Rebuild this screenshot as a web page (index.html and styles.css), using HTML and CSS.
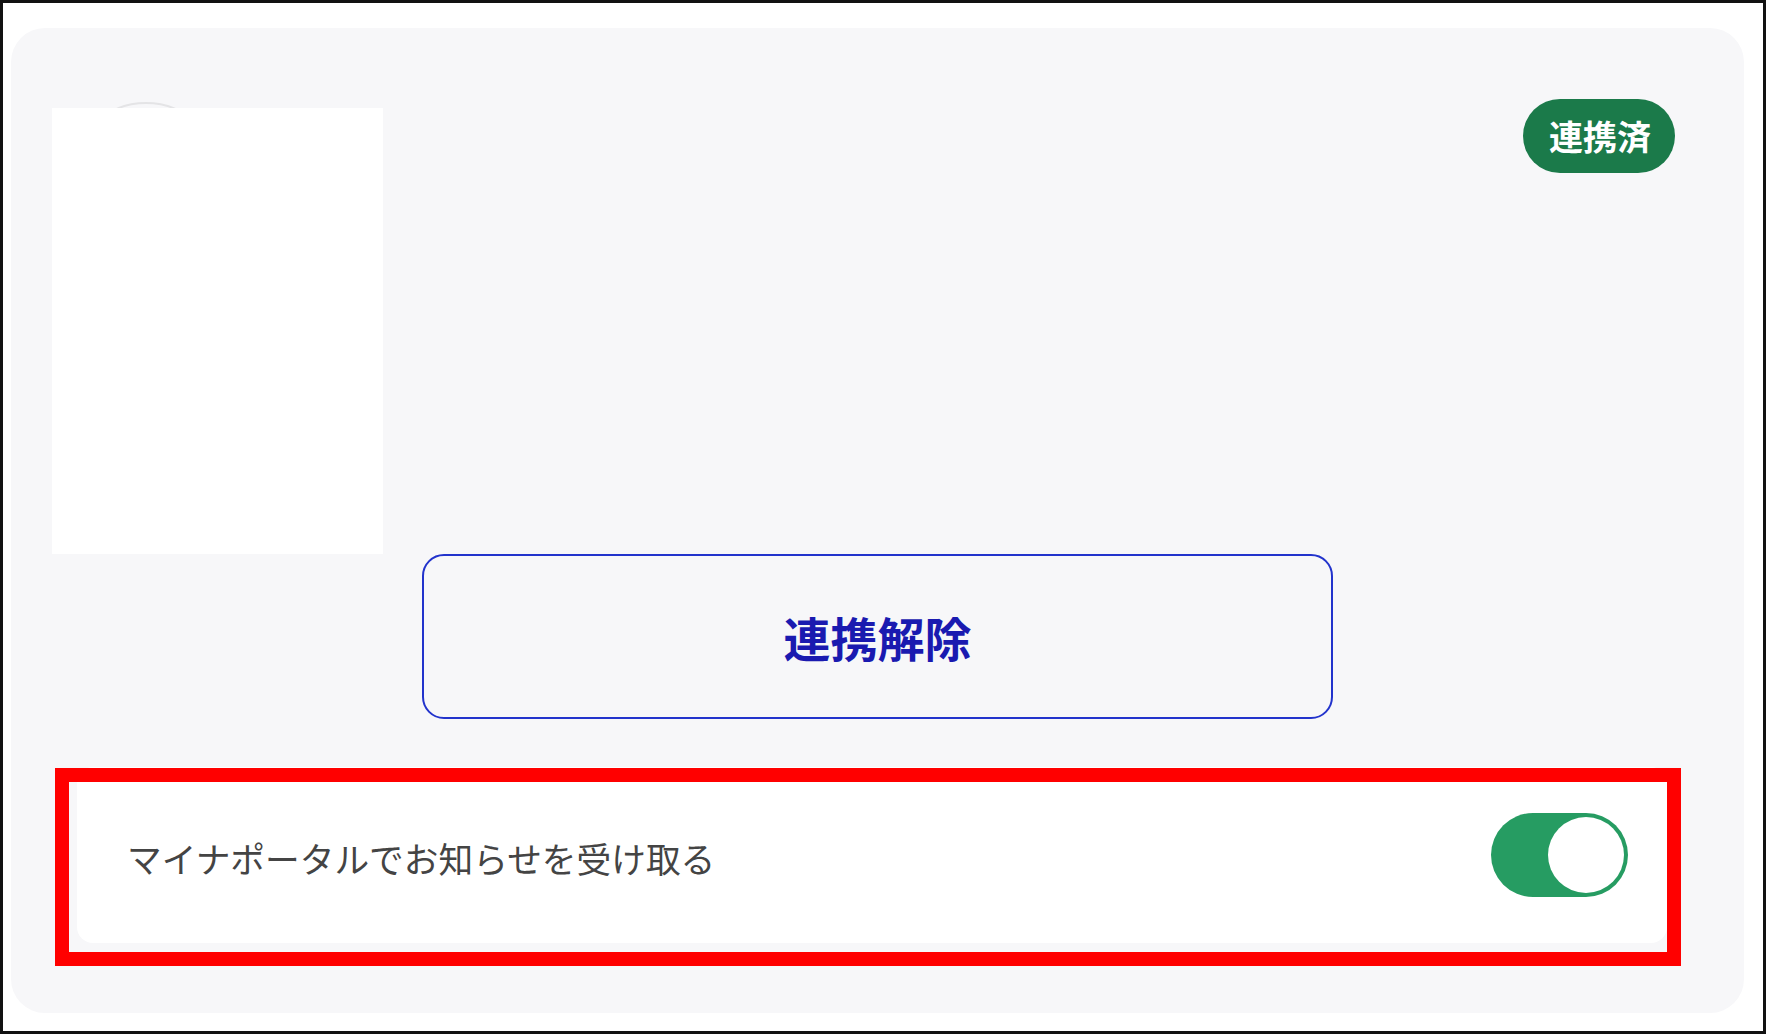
FILE: index.html
```
<!DOCTYPE html>
<html lang="ja">
<head>
    <meta charset="UTF-8">
    <meta name="viewport" content="width=device-width, initial-scale=1.0">
    <title>連携設定</title>
    <link rel="stylesheet" href="styles.css">
</head>
<body>

<div class="frame">
    <div class="card">
        <div class="card-top">
            <div class="avatar"></div>
            <span class="badge">連携済</span>
        </div>

        <button class="unlink-button">連携解除</button>

        <div class="notice-row">
            <span class="notice-label">マイナポータルでお知らせを受け取る</span>
            <div class="toggle is-on">
                <div class="toggle-knob"></div>
            </div>
        </div>

        <!-- redacted area and annotation -->
        <div class="redacted"></div>
        <div class="highlight"></div>
    </div>
</div>

</body>
</html>
```

FILE: styles.css
```
* {
    box-sizing: border-box;
}
body {
    margin: 0;
    padding: 0;
    background-color: #fff;
    font-family: "Noto Sans CJK JP", "Noto Sans", sans-serif;
}
.frame {
    width: 1766px;
    height: 1034px;
    border: 3px solid #111;
    padding: 25px 0 0 8px;
}
.card {
    position: relative;
    width: 1733px;
    height: 985px;
    background-color: #f7f7f9;
    border-radius: 34px;
    padding-top: 71px;
}
.card-top {
    display: flex;
    justify-content: space-between;
    align-items: flex-start;
    height: 455px;
    padding: 0 69px 0 60px;
}
.avatar {
    width: 150px;
    height: 150px;
    margin-top: 3px;
    border: 2px solid #e4e4e6;
    border-radius: 50%;
}
.badge {
    display: inline-block;
    height: 74px;
    line-height: 74px;
    padding: 0 24px 0 26px;
    background-color: #1b7a4a;
    color: #fff;
    font-size: 34px;
    font-weight: bold;
    border-radius: 37px;
}
.unlink-button {
    display: block;
    width: 911px;
    height: 165px;
    margin: 0 auto;
    background: transparent;
    border: 2px solid #2233cc;
    border-radius: 22px;
    color: #1a1ab0;
    font-family: inherit;
    font-size: 47px;
    font-weight: bold;
    cursor: pointer;
}
.notice-row {
    display: flex;
    justify-content: space-between;
    align-items: center;
    width: 1590px;
    height: 176px;
    margin: 48px 0 0 66px;
    padding: 0 39px 0 50px;
    background-color: #fff;
    border-radius: 16px;
}
.notice-label {
    font-size: 34.7px;
    line-height: 1;
    color: #444;
    margin-top: 6px;
}
.toggle {
    position: relative;
    width: 137px;
    height: 84px;
    border-radius: 42px;
    background-color: #ccc;
}
.toggle.is-on {
    background-color: #269c62;
}
.toggle-knob {
    position: absolute;
    top: 4px;
    right: 4px;
    width: 76px;
    height: 76px;
    border-radius: 50%;
    background-color: #fff;
}
.redacted {
    position: absolute;
    left: 41px;
    top: 80px;
    width: 331px;
    height: 446px;
    background-color: #fff;
}
.highlight {
    position: absolute;
    left: 44px;
    top: 740px;
    width: 1626px;
    height: 198px;
    border: 14px solid #ff0000;
}
```
